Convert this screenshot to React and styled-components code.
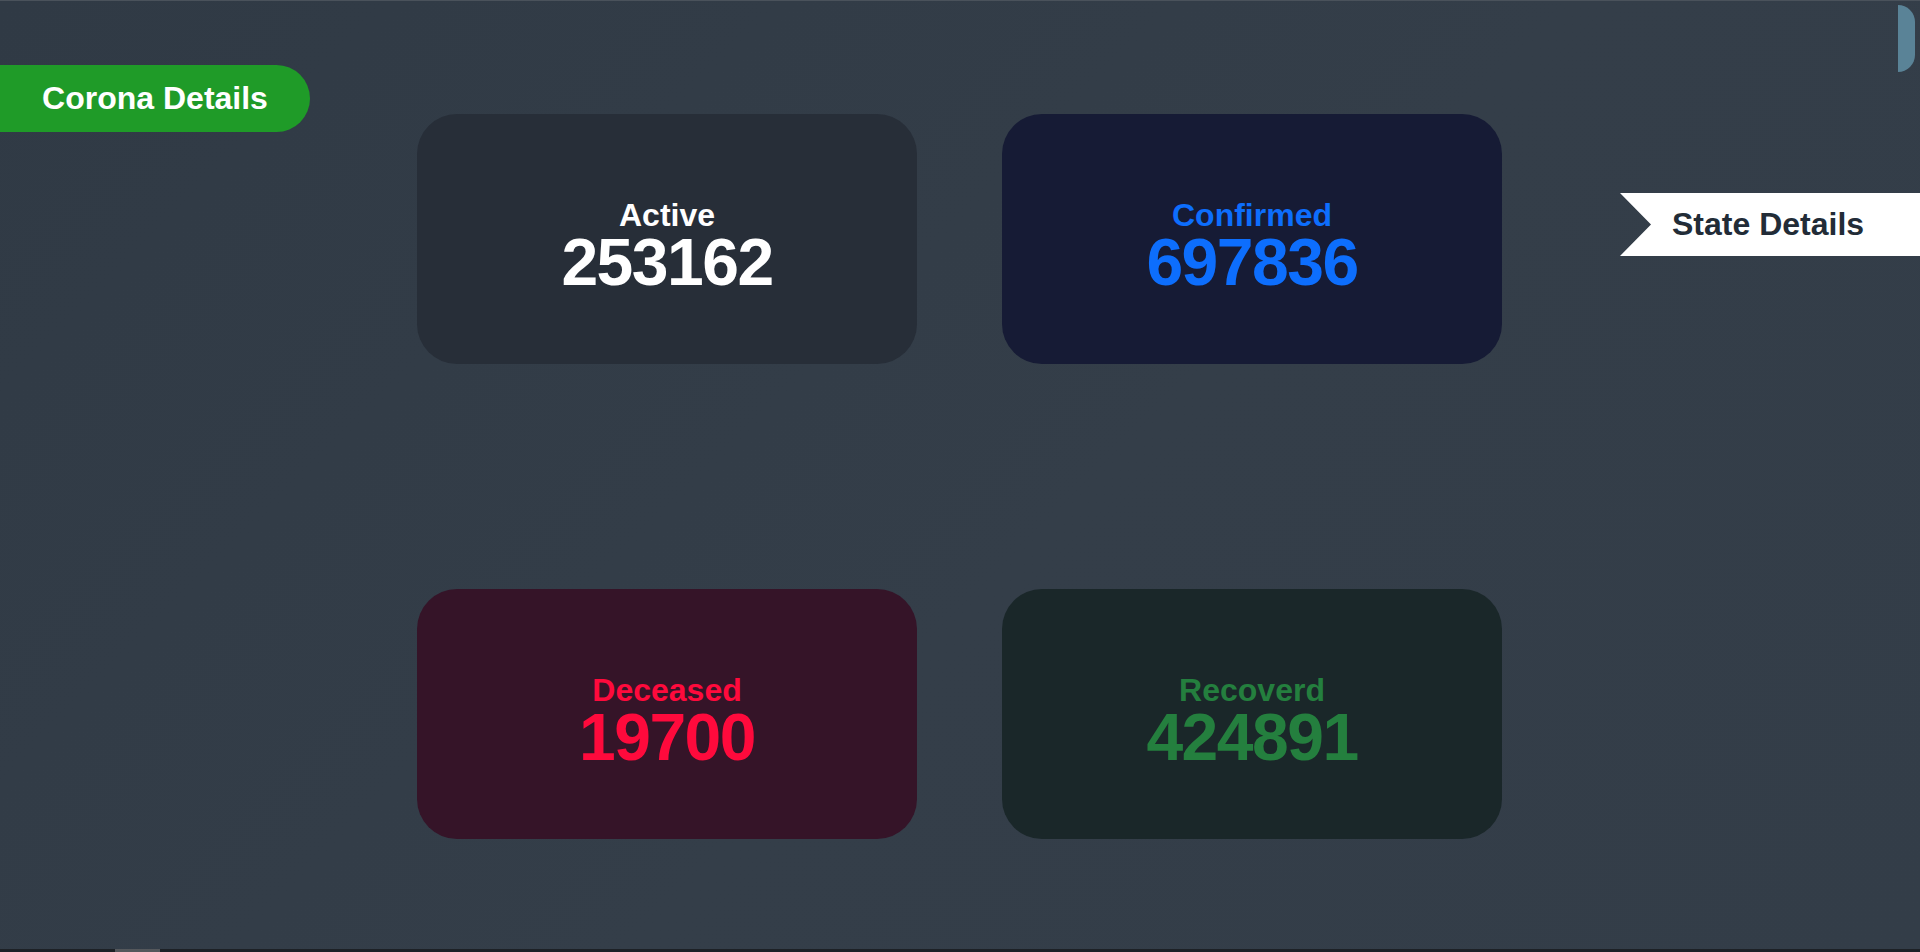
import styled, { createGlobalStyle } from 'styled-components';

const GlobalStyle = createGlobalStyle`
  html, body {
    margin: 0;
    padding: 0;
    height: 100%;
    overflow: hidden;
  }
  body {
    background: #333d48;
    font-family: 'Liberation Sans', Arial, sans-serif;
  }
`;

const Page = styled.div`
  position: relative;
  box-sizing: border-box;
  height: 952px;
  border-top: 1px solid #4a525b;
  border-bottom: 3px solid #1d2126;
  background: linear-gradient(135deg, #303a45 0%, #343e49 55%, #333d48 100%);
  display: flex;
  align-items: flex-start;
`;

const Side = styled.div`
  width: 417px;
  flex-shrink: 0;
  padding-top: 64px;
`;

const Pill = styled.div`
  box-sizing: border-box;
  width: 310px;
  height: 67px;
  padding: 0 20px;
  display: flex;
  align-items: center;
  justify-content: center;
  white-space: nowrap;
  background: #1f9b28;
  color: #fff;
  font-size: 32px;
  font-weight: 700;
  border-radius: 0 34px 34px 0;
`;

const Grid = styled.div`
  display: grid;
  grid-template-columns: repeat(2, 500px);
  grid-auto-rows: 250px;
  column-gap: 85px;
  row-gap: 225px;
  padding-top: 113px;
`;

const Card = styled.div`
  box-sizing: border-box;
  border-radius: 40px;
  background: ${(p) => p.$bg};
  color: ${(p) => p.$fg};
  display: flex;
  flex-direction: column;
  align-items: center;
  justify-content: center;
  padding-top: 16px;
  font-weight: 700;
`;

const Label = styled.div`
  font-size: 32px;
  line-height: 1;
`;

const Count = styled.div`
  font-size: 66px;
  line-height: 0.96;
  letter-spacing: -1.5px;
`;

const Right = styled.div`
  flex: 1;
  display: flex;
  justify-content: flex-end;
  padding-top: 192px;
`;

const Banner = styled.div`
  box-sizing: border-box;
  width: 300px;
  height: 63px;
  padding-left: 52px;
  display: flex;
  align-items: center;
  white-space: nowrap;
  background: #fff;
  color: #222c37;
  font-size: 32px;
  font-weight: 700;
  clip-path: polygon(0 0, 100% 0, 100% 100%, 0 100%, 31px 50%);
`;

const Thumb = styled.div`
  position: absolute;
  top: 4px;
  right: 5px;
  width: 17px;
  height: 67px;
  background: #5a8397;
  border-radius: 0 17px 17px 0;
`;

const BottomThumb = styled.div`
  position: absolute;
  bottom: -3px;
  left: 115px;
  width: 45px;
  height: 3px;
  background: #55585c;
`;

const stats = [
  { label: 'Active', value: '253162', bg: '#272e38', fg: '#ffffff' },
  { label: 'Confirmed', value: '697836', bg: '#161b35', fg: '#0d6efd' },
  { label: 'Deceased', value: '19700', bg: '#351428', fg: '#ff0a3c' },
  { label: 'Recoverd', value: '424891', bg: '#1a2729', fg: '#247f3e' },
];

const App = () => {
  return (
    <>
      <GlobalStyle />
      <Page>
        <Side>
          <Pill>Corona Details</Pill>
        </Side>
        <Grid>
          {stats.map((s) => (
            <Card key={s.label} $bg={s.bg} $fg={s.fg}>
              <Label>{s.label}</Label>
              <Count>{s.value}</Count>
            </Card>
          ))}
        </Grid>
        <Right>
          <Banner>State Details</Banner>
        </Right>
        <Thumb />
        <BottomThumb />
      </Page>
    </>
  );
};

export default App;
